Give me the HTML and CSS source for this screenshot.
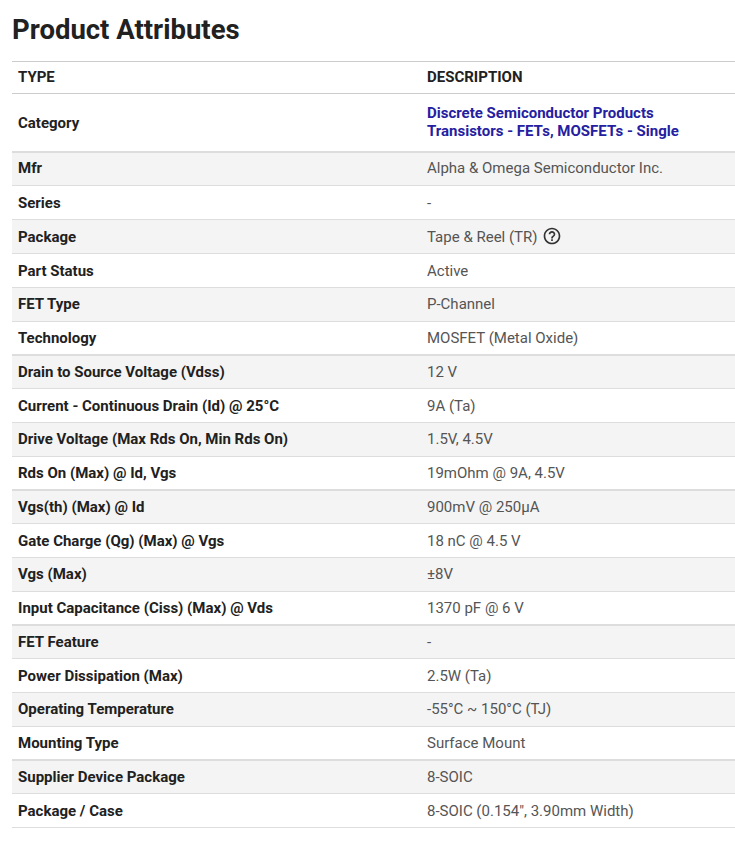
FILE: index.html
```html
<!DOCTYPE html>
<html lang="en">
<head>
<meta charset="utf-8">
<title>Product Attributes</title>
<link rel="stylesheet" href="styles.css">
</head>
<body>
<h2 class="title">Product Attributes</h2>
<div class="table">
  <div class="row head"><div class="k">TYPE</div><div class="v">DESCRIPTION</div></div>
  <div class="row cat"><div class="k">Category</div><div class="v"><a href="#">Discrete Semiconductor Products</a><a href="#">Transistors - FETs, MOSFETs - Single</a></div></div>
  <div class="row mfr"><div class="k">Mfr</div><div class="v">Alpha &amp; Omega Semiconductor Inc.</div></div>
  <div class="row low"><div class="k">Series</div><div class="v">-</div></div>
  <div class="row low"><div class="k">Package</div><div class="v">Tape &amp; Reel (TR)<svg class="help" viewBox="0 0 24 24" width="20" height="20" aria-hidden="true"><path d="M11 18h2v-2h-2v2zm1-16C6.48 2 2 6.48 2 12s4.48 10 10 10 10-4.48 10-10S17.52 2 12 2zm0 18c-4.41 0-8-3.59-8-8s3.59-8 8-8 8 3.59 8 8-3.59 8-8 8zm0-14c-2.21 0-4 1.79-4 4h2c0-1.1.9-2 2-2s2 .9 2 2c0 2-3 1.75-3 5h2c0-2.25 3-2.5 3-5 0-2.21-1.79-4-4-4z"/></svg></div></div>
  <div class="row low"><div class="k">Part Status</div><div class="v">Active</div></div>
  <div class="row"><div class="k">FET Type</div><div class="v">P-Channel</div></div>
  <div class="row"><div class="k">Technology</div><div class="v">MOSFET (Metal Oxide)</div></div>
  <div class="row"><div class="k">Drain to Source Voltage (Vdss)</div><div class="v">12 V</div></div>
  <div class="row low"><div class="k">Current - Continuous Drain (Id) @ 25°C</div><div class="v">9A (Ta)</div></div>
  <div class="row"><div class="k">Drive Voltage (Max Rds On, Min Rds On)</div><div class="v">1.5V, 4.5V</div></div>
  <div class="row"><div class="k">Rds On (Max) @ Id, Vgs</div><div class="v">19mOhm @ 9A, 4.5V</div></div>
  <div class="row"><div class="k">Vgs(th) (Max) @ Id</div><div class="v">900mV @ 250µA</div></div>
  <div class="row low"><div class="k">Gate Charge (Qg) (Max) @ Vgs</div><div class="v">18 nC @ 4.5 V</div></div>
  <div class="row"><div class="k">Vgs (Max)</div><div class="v">±8V</div></div>
  <div class="row"><div class="k">Input Capacitance (Ciss) (Max) @ Vds</div><div class="v">1370 pF @ 6 V</div></div>
  <div class="row"><div class="k">FET Feature</div><div class="v">-</div></div>
  <div class="row low"><div class="k">Power Dissipation (Max)</div><div class="v">2.5W (Ta)</div></div>
  <div class="row"><div class="k">Operating Temperature</div><div class="v">-55°C ~ 150°C (TJ)</div></div>
  <div class="row"><div class="k">Mounting Type</div><div class="v">Surface Mount</div></div>
  <div class="row"><div class="k">Supplier Device Package</div><div class="v">8-SOIC</div></div>
  <div class="row low"><div class="k">Package / Case</div><div class="v">8-SOIC (0.154", 3.90mm Width)</div></div>
</div>
</body>
</html>
```
FILE: styles.css
```css
html, body { margin: 0; padding: 0; background: #fff; }
body {
  padding: 14px 0 0 12px;
  font-family: Roboto, "Liberation Sans", sans-serif;
  color: #212121;
}
.title {
  margin: 0 0 16px;
  font-size: 27.5px;
  line-height: 31px;
  font-weight: 700;
}
.table { border-top: 1px solid #ccc; }
.row {
  display: grid;
  grid-template-columns: 409px 1fr;
  align-items: center;
  height: 34px;
  box-sizing: border-box;
  border-bottom: 1px solid #ddd;
  font-size: 15px;
  line-height: 17px;
}
.row:nth-child(odd) { background: #f4f4f4; }
.row:nth-child(4n+8) { border-bottom-width: 2px; }
.row:nth-child(4n+9) { height: 33px; }
.row.low { padding-top: 1px; }
.row.mfr { height: 33px; padding-bottom: 1px; }
.row.head { height: 32px; background: #fff; border-bottom-color: #ccc; }
.row.cat { height: 59px; background: #fff; border-bottom: 2px solid #ddd; }
.k { padding-left: 6px; font-weight: 700; }
.v { padding-left: 6px; color: #555; display: flex; align-items: center; }
.head .v { color: #212121; font-weight: 700; }
.cat .k { padding-top: 1px; }
.cat .v { flex-direction: column; align-items: flex-start; padding-bottom: 2px; }
.cat a { color: #2520a0; font-weight: 700; text-decoration: none; line-height: 18px; }
.help { margin: -2px 0 0 4px; fill: #333; }
```
